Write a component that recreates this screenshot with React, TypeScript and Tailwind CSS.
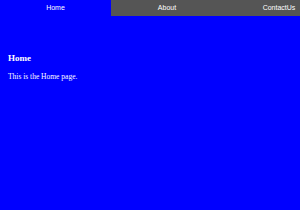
export default function App() {
  const tabs = ["Home", "About", "ContactUs"];
  const active = "Home";

  return (
    <div className="h-[210px] w-[300px] overflow-hidden bg-[#0000ff] text-white">
      <nav className="flex h-4 w-[335px] bg-[#555555] font-['Liberation_Sans',sans-serif] text-[7px]">
        {tabs.map((tab) => (
          <div
            key={tab}
            className={`flex items-center justify-center ${
              tab === active ? "w-[111px] bg-[#0000ff]" : "w-[112px]"
            }`}
          >
            {tab}
          </div>
        ))}
      </nav>
      <div className="px-2 pt-[38px] font-['Liberation_Serif',serif]">
        <h3 className="text-[9px] font-bold leading-none">Home</h3>
        <p className="mt-[10px] text-[7.5px] leading-none">This is the Home page.</p>
      </div>
    </div>
  );
}
